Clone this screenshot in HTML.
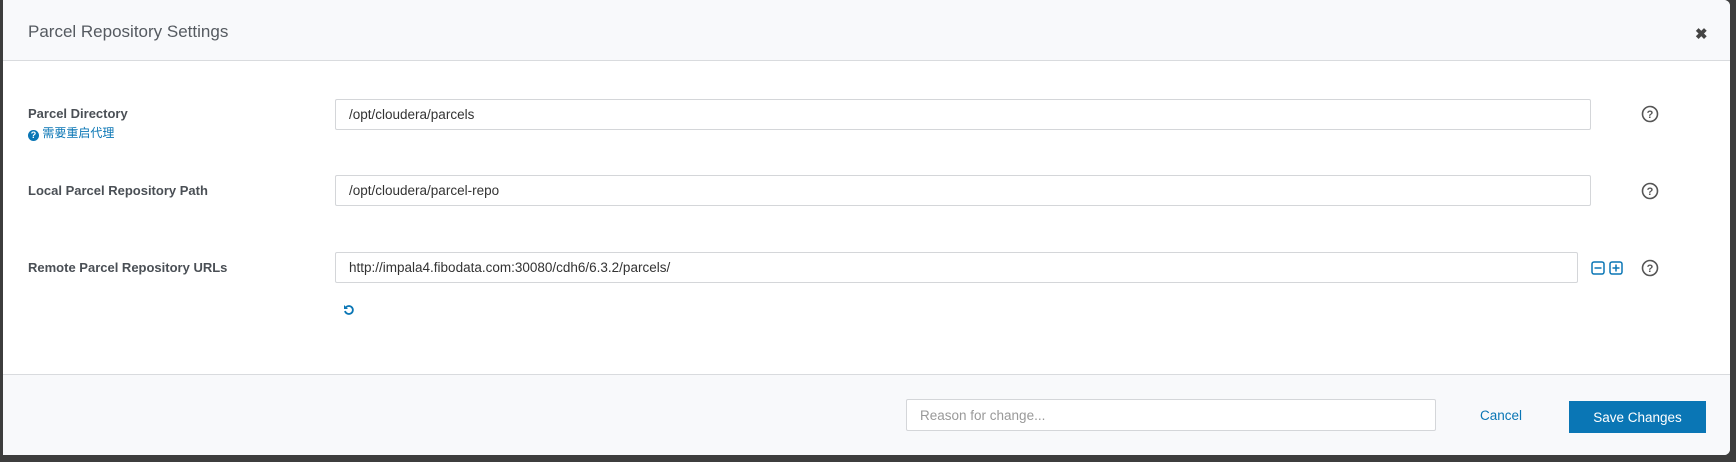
<!DOCTYPE html>
<html><head><meta charset="utf-8"><style>
*{box-sizing:border-box;margin:0;padding:0}
body{width:1736px;height:462px;background:#3d3d3d;position:relative;overflow:hidden;font-family:"Liberation Sans","Noto Sans CJK SC",sans-serif}
.modal{position:absolute;left:3px;top:0;width:1727px;height:455px;background:#fff;border-radius:0 6px 6px 0;overflow:hidden}
.hdr{position:absolute;left:0;top:0;width:100%;height:61px;background:#f8f9fb;border-bottom:1px solid #d9dbde}
.title{position:absolute;left:25px;top:22px;font-size:17px;color:#555a60}
.close{position:absolute;left:1692px;top:25px;font-size:15px;font-weight:bold;color:#444}
.lbl{position:absolute;left:25px;font-size:13px;font-weight:bold;color:#4a4f55}
.sub{position:absolute;left:25px;top:124px;font-size:12px;color:#0a76b5}
.inp{position:absolute;border:1px solid #d4d6d9;border-radius:2px;background:#fff;font-size:13.5px;color:#333;padding-left:13px;display:flex;align-items:center}
.help{position:absolute;left:1638px;width:18px;height:18px}
.foot{position:absolute;left:0;top:374px;width:100%;height:81px;background:#f8f9fb;border-top:1px solid #d9dbde}
</style></head><body>
<div class="modal">
<div class="hdr"><div class="title">Parcel Repository Settings</div><div class="close">✖</div></div>

<div class="lbl" style="top:106px">Parcel Directory</div>
<div class="sub"><span style="display:inline-block;width:11px;height:11px;border-radius:50%;background:#0a76b5;color:#fff;font-size:9px;font-weight:bold;text-align:center;line-height:11px;vertical-align:-1px">?</span> 需要重启代理</div>
<div class="inp" style="left:332px;top:99px;width:1256px;height:31px">/opt/cloudera/parcels</div>

<div class="lbl" style="top:183px">Local Parcel Repository Path</div>
<div class="inp" style="left:332px;top:175px;width:1256px;height:31px">/opt/cloudera/parcel-repo</div>

<div class="lbl" style="top:260px">Remote Parcel Repository URLs</div>
<div class="inp" style="left:332px;top:252px;width:1243px;height:31px">http://impala4.fibodata.com:30080/cdh6/6.3.2/parcels/</div>

<svg class="help" style="top:105px" viewBox="0 0 18 18"><circle cx="9" cy="9" r="7.5" fill="none" stroke="#555" stroke-width="1.6"/><text x="9" y="13" font-size="11" font-weight="bold" text-anchor="middle" fill="#555" font-family="Liberation Sans">?</text></svg>
<svg class="help" style="top:182px" viewBox="0 0 18 18"><circle cx="9" cy="9" r="7.5" fill="none" stroke="#555" stroke-width="1.6"/><text x="9" y="13" font-size="11" font-weight="bold" text-anchor="middle" fill="#555" font-family="Liberation Sans">?</text></svg>
<svg class="help" style="top:259px" viewBox="0 0 18 18"><circle cx="9" cy="9" r="7.5" fill="none" stroke="#555" stroke-width="1.6"/><text x="9" y="13" font-size="11" font-weight="bold" text-anchor="middle" fill="#555" font-family="Liberation Sans">?</text></svg>

<svg style="position:absolute;left:1588px;top:261px" width="34" height="14" viewBox="0 0 34 14">
<rect x="1" y="1" width="12" height="12" rx="2" fill="none" stroke="#0a76b5" stroke-width="1.5"/><line x1="3.5" y1="7" x2="10.5" y2="7" stroke="#0a76b5" stroke-width="1.5"/>
<rect x="19" y="1" width="12" height="12" rx="2" fill="none" stroke="#0a76b5" stroke-width="1.5"/><line x1="21.5" y1="7" x2="28.5" y2="7" stroke="#0a76b5" stroke-width="1.5"/><line x1="25" y1="3.5" x2="25" y2="10.5" stroke="#0a76b5" stroke-width="1.5"/>
</svg>
<svg style="position:absolute;left:340px;top:304px" width="12" height="12" viewBox="0 0 12 12"><path d="M3 3.2A4 4 0 1 1 2 7" fill="none" stroke="#0a76b5" stroke-width="1.8"/><path d="M1 1v4h4z" fill="#0a76b5"/></svg>

<div class="foot">
<div class="inp" style="left:903px;top:24px;width:530px;height:32px;color:#999">Reason for change...</div>
<div style="position:absolute;left:1477px;top:33px;font-size:13.5px;color:#0a76b5">Cancel</div>
<div style="position:absolute;left:1566px;top:26px;width:137px;height:32px;background:#0a76b5;color:#fff;font-size:13.5px;display:flex;align-items:center;justify-content:center">Save Changes</div>
</div>
</div>
</body></html>
